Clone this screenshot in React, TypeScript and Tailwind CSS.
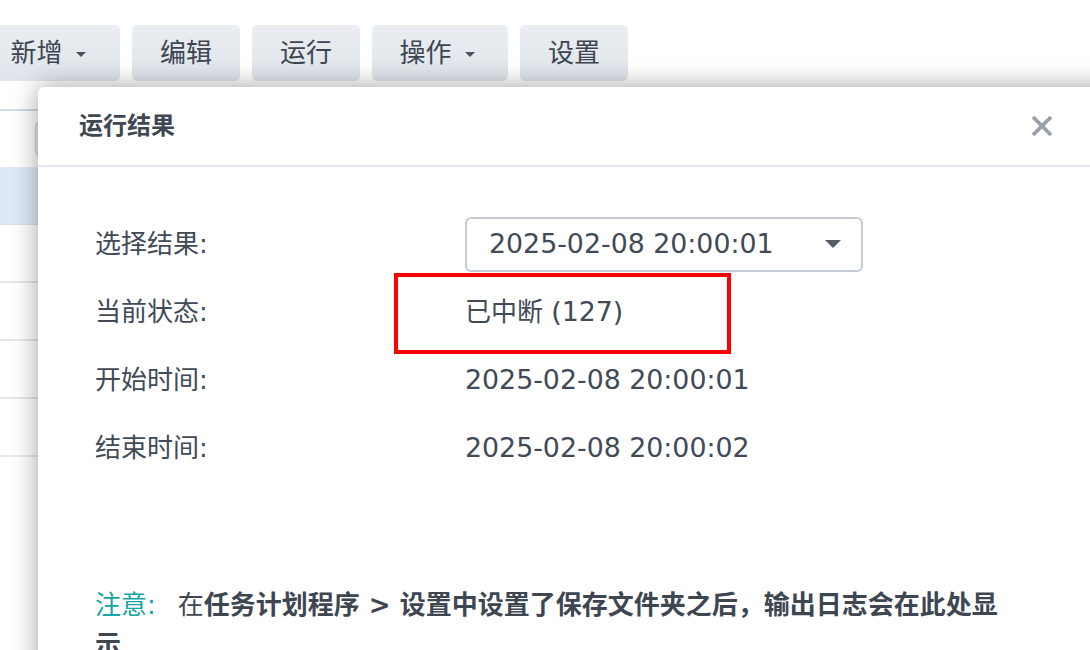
import React from "react";

const FONT = { fontFamily: '"DejaVu Sans", "Noto Sans CJK SC", sans-serif' };

function Caret({ className }: { className?: string }) {
  return (
    <svg className={className} viewBox="0 0 10 5" width="10" height="5">
      <path d="M0 0 L10 0 L5 5 Z" fill="currentColor" />
    </svg>
  );
}

function ToolButton({ label, caret, width }: { label: string; caret?: boolean; width: string }) {
  return (
    <div
      className={`${width} h-[56px] shrink-0 rounded-[5px] bg-gradient-to-b from-[#eaeef2] to-[#e0e5eb] flex items-center justify-center text-[26px] text-[#3d4652]`}
    >
      <span>{label}</span>
      {caret && <Caret className="text-[#4a525d] mt-[2px] ml-[13px] mr-[6px]" />}
    </div>
  );
}

function Row({ label, children }: { label: string; children: React.ReactNode }) {
  return (
    <div className="h-[68px] flex items-center">
      <div className="w-[370px] shrink-0 text-[26px] text-[#414a56]">{label}:</div>
      <div className="text-[26px] text-[#414a56]">{children}</div>
    </div>
  );
}

function Num({ children }: { children: React.ReactNode }) {
  return <span className="text-[26.8px]">{children}</span>;
}

export default function App() {
  return (
    <div className="relative w-[1090px] h-[650px] overflow-hidden bg-white" style={FONT}>
      {/* Toolbar */}
      <div className="flex gap-[12px] pt-[25px] ml-[-18px]">
        <ToolButton label="新增" caret width="w-[138px]" />
        <ToolButton label="编辑" width="w-[108px]" />
        <ToolButton label="运行" width="w-[108px]" />
        <ToolButton label="操作" caret width="w-[136px]" />
        <ToolButton label="设置" width="w-[108px]" />
      </div>

      {/* Background table */}
      <div className="mt-[28px] flex flex-col">
        <div className="h-[58px] border-t-2 border-[#d3dce7] flex items-center pl-[35px]">
          <div className="w-[40px] h-[36px] rounded-[5px] bg-[#e6eaef] border border-[#cfd6df]" />
        </div>
        <div className="h-[58px] bg-[#dfe9f6] border-b border-[#d8e0ea]" />
        <div className="h-[58px] border-b-2 border-[#e3e8ee]" />
        <div className="h-[58px] border-b-2 border-[#e3e8ee]" />
        <div className="h-[58px] border-b-2 border-[#e3e8ee]" />
        <div className="h-[58px] border-b-2 border-[#e3e8ee]" />
      </div>

      {/* Modal */}
      <div className="absolute left-[38px] top-[87px] w-[1100px] h-[620px] bg-white rounded-tl-[6px] shadow-[0_0_26px_rgba(0,0,0,0.38)]">
        <div className="h-[80px] border-b-2 border-[#e2e7ef] flex items-center justify-between pl-[41px] pr-[85px]">
          <div className="text-[24px] font-semibold text-[#3f4753]">运行结果</div>
          <svg width="22" height="22" viewBox="0 0 22 22">
            <path d="M2 2 L20 20 M20 2 L2 20" stroke="#9aa0a7" strokeWidth="3.8" strokeLinecap="butt" />
          </svg>
        </div>
        <div className="pl-[57px] pt-[43px]">
          <Row label="选择结果">
            <div className="w-[398px] h-[55px] rounded-[6px] border-2 border-[#c4cbd4] flex items-center justify-between pl-[22px] pr-[20px]">
              <Num>2025-02-08 20:00:01</Num>
              <svg width="16" height="8" viewBox="0 0 16 8">
                <path d="M0 0 L16 0 L8 8 Z" fill="#535b66" />
              </svg>
            </div>
          </Row>
          <Row label="当前状态">
            已中断 <Num>(127)</Num>
          </Row>
          <Row label="开始时间">
            <Num>2025-02-08 20:00:01</Num>
          </Row>
          <Row label="结束时间">
            <Num>2025-02-08 20:00:02</Num>
          </Row>
          <p className="w-[915px] mt-[103px] text-[26px] leading-[40px] text-[#3e4652]">
            <span className="text-[#17a5a5] mr-[22px]">注意:</span>
            在<span className="font-bold">任务计划程序 &gt; 设置中设置了保存文件夹之后，输出日志会在此处显示</span>
          </p>
        </div>
      </div>

      {/* Red annotation box */}
      <div className="absolute left-[394px] top-[273px] w-[337px] h-[81px] border-[4px] border-[#ff0000]" />
    </div>
  );
}
